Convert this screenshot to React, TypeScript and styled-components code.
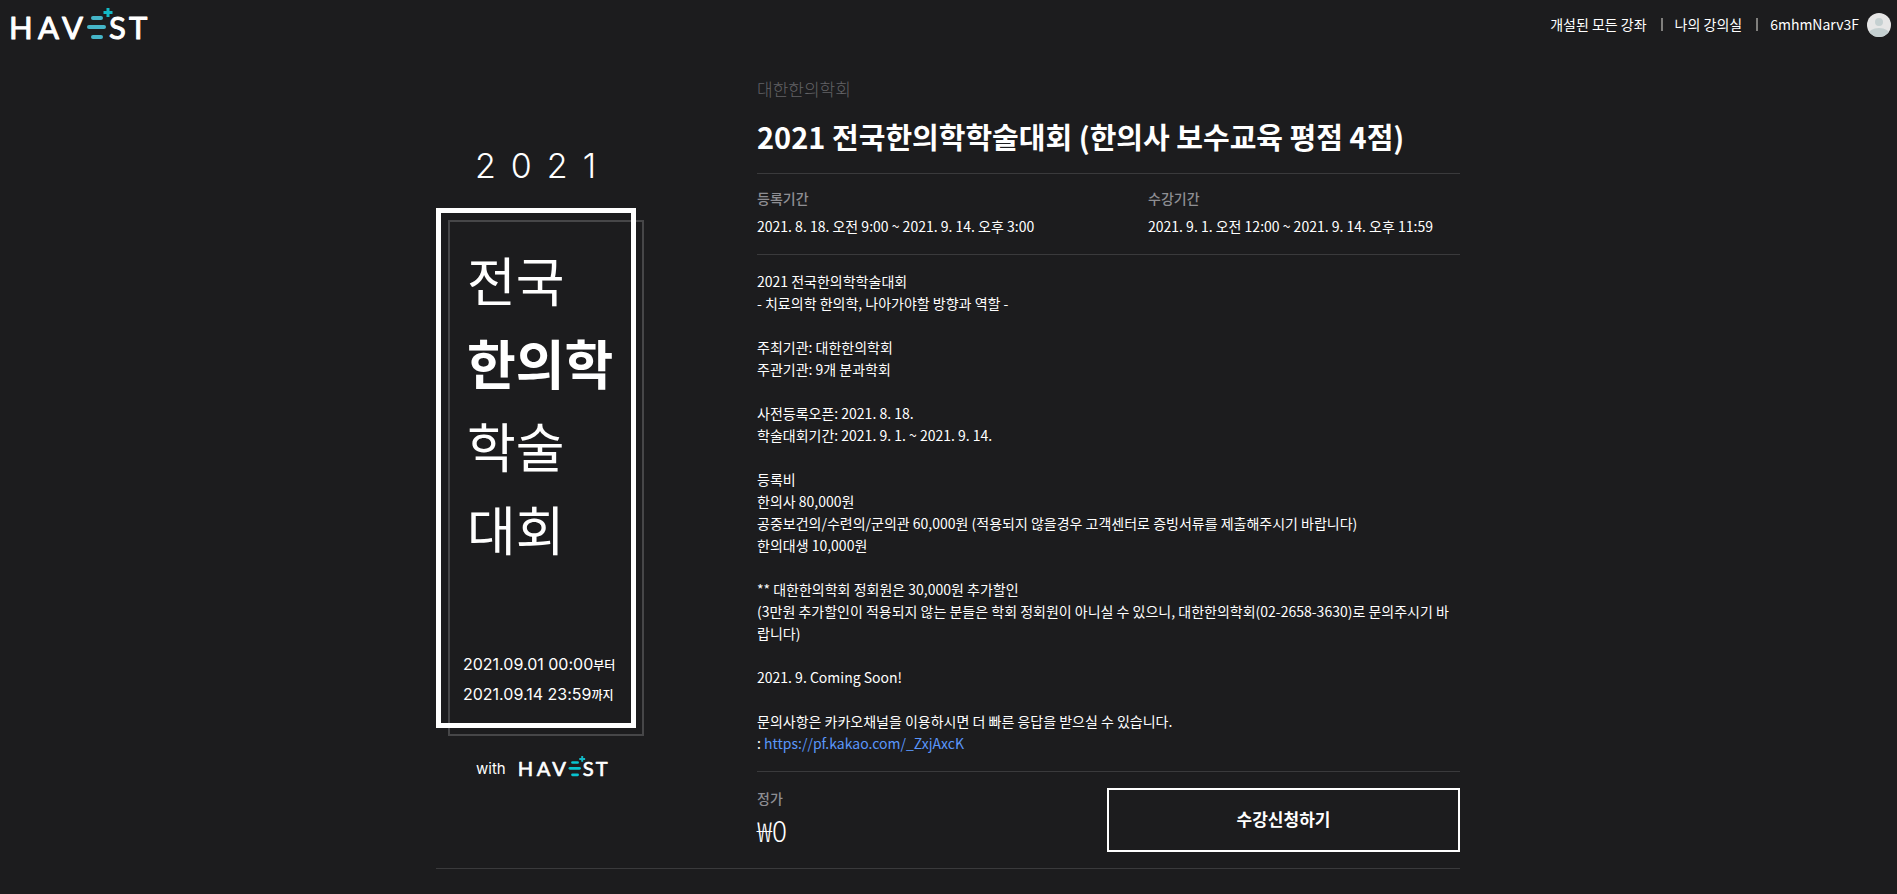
import React from "react";
import styled, { createGlobalStyle } from "styled-components";

const GlobalStyle = createGlobalStyle`
  *, *::before, *::after { box-sizing: border-box; }
  body {
    margin: 0;
    background: #1c1c1e;
    color: #fff;
    font-family: "Noto Sans CJK KR", sans-serif;
    font-size: 14px;
    line-height: 22px;
  }
  a { color: inherit; text-decoration: none; }
  h1, h2, p, dl, dt, dd { margin: 0; }
`;

const Header = styled.header`
  display: flex;
  justify-content: space-between;
  align-items: flex-start;
  height: 64px;
  padding: 0 6px 0 8px;
`;

const LogoLink = styled.a`
  display: block;
  padding-top: 8px;
`;

const Nav = styled.nav`
  display: flex;
  align-items: flex-start;
  padding-top: 12px;

  svg { margin: 1px 0 0 8px; }
`;

const NavLink = styled.a`
  display: flex;
  align-items: center;
  line-height: 24px;

  & + &::before {
    content: "";
    width: 2px;
    height: 13px;
    margin: 0 12px 0 14px;
    background: #807f7d;
  }
`;

const Page = styled.div`
  padding-right: 1px;
`;

const Main = styled.main`
  max-width: 1024px;
  margin: 0 auto;
  padding-top: 10px;
`;

const Course = styled.article`
  display: grid;
  grid-template-columns: 208px minmax(0, 1fr);
  column-gap: 113px;
  padding-bottom: 16px;
  border-bottom: 1px solid #3a3a3c;
`;

const Poster = styled.figure`
  margin: 0;
  padding-top: 71px;
  font-family: Inter, "Noto Sans CJK KR", sans-serif;
`;

const PosterYear = styled.p`
  padding-left: 39px;
  font-size: 34px;
  font-weight: 300;
  line-height: 42px;
  letter-spacing: 15px;
`;

const PosterFrame = styled.div`
  position: relative;
  width: 200px;
  height: 520px;
  margin-top: 21px;
  padding: 25px 0 14px 22px;
  border: 5px solid #fff;
  display: flex;
  flex-direction: column;
  justify-content: space-between;

  &::before {
    content: "";
    position: absolute;
    z-index: -1;
    top: 7px;
    left: 7px;
    width: 196px;
    height: 516px;
    border: 2px solid #464648;
  }
`;

const PosterTitle = styled.p`
  padding-left: 4px;
  font-family: "Noto Sans CJK KR", sans-serif;
  font-size: 53px;
  line-height: 83px;
`;

const PosterDates = styled.p`
  font-size: 16px;
  line-height: 30px;
  white-space: nowrap;

  small { font-size: 12px; font-weight: 500; line-height: 12px; }
`;

const PosterCredit = styled.figcaption`
  display: flex;
  align-items: center;
  gap: 11px;
  padding: 26px 0 0 40px;
  font-size: 15px;
  line-height: 30px;
`;

const Organizer = styled.p`
  color: #636366;
  font-size: 17px;
  font-weight: 300;
  line-height: 30px;
`;

const Title = styled.h1`
  padding: 11px 0 16px;
  font-size: 29px;
  font-weight: 700;
  line-height: 42px;
`;

const Periods = styled.dl`
  display: grid;
  grid-template-columns: 391px minmax(0, 1fr);
  padding: 10px 0 14px;
  border: solid #3a3a3c;
  border-width: 1px 0;
`;

const Term = styled.dt`
  color: #8e8e93;
  font-weight: 500;
  line-height: 28px;
`;

const Value = styled.dd<{ $large?: boolean }>`
  font-size: ${(p) => (p.$large ? 28 : 14)}px;
  font-weight: ${(p) => (p.$large ? 300 : 400)};
  line-height: ${(p) => (p.$large ? 36 : 28)}px;
`;

const Description = styled.div`
  padding: 15px 0 17px;
  border-bottom: 1px solid #3a3a3c;
  white-space: pre-line;
`;

const TextLink = styled.a`
  color: #5a96fa;
`;

const Purchase = styled.div`
  display: grid;
  grid-template-columns: minmax(0, 1fr) 353px;
  align-items: start;
  padding-top: 16px;
`;

const Price = styled.dl`
  margin-top: -4px;
`;

const ApplyButton = styled.button`
  height: 64px;
  padding: 0 0 2px;
  border: 2px solid #fff;
  background: transparent;
  color: #fff;
  font: 700 17px/24px "Noto Sans CJK KR", sans-serif;
  cursor: pointer;
`;

function Logo({ width, height, bar }: { width: number; height: number; bar: string }) {
  return (
    <svg width={width} height={height} viewBox="-4 0 144 40" overflow="visible" role="img" aria-label="HAVEST">
      <g fill="#fff" stroke="#fff" strokeLinejoin="round" fontFamily="Lato, sans-serif" fontSize="31">
        <text x="-3 26 50" y="31">HAV</text>
        <text x="97 117" y="31">ST</text>
      </g>
      <g fill={bar}>
        <rect x="79" y="8" width="12" height="4" rx="2" />
        <rect x="75" y="17" width="19" height="4" rx="2" />
        <rect x="79" y="27" width="12" height="4" rx="2" />
      </g>
      <path d="M96 0v9M91.500 4.500h9" stroke="#12b9c6" strokeWidth="3" />
    </svg>
  );
}

function Avatar() {
  return (
    <svg width="24" height="24" viewBox="0 0 24 24" aria-hidden="true">
      <clipPath id="avatar-clip"><circle cx="12" cy="12" r="12" /></clipPath>
      <g clipPath="url(#avatar-clip)">
        <rect width="24" height="24" fill="#e6e6e6" />
        <circle cx="12" cy="9" r="4" fill="#c5d0d1" />
        <ellipse cx="12" cy="22" rx="11" ry="7" fill="#c5d0d1" />
      </g>
    </svg>
  );
}

const description = `2021 전국한의학학술대회
- 치료의학 한의학, 나아가야할 방향과 역할 -

주최기관: 대한한의학회
주관기관: 9개 분과학회

사전등록오픈: 2021. 8. 18.
학술대회기간: 2021. 9. 1. ~ 2021. 9. 14.

등록비
한의사 80,000원
공중보건의/수련의/군의관 60,000원 (적용되지 않을경우 고객센터로 증빙서류를 제출해주시기 바랍니다)
한의대생 10,000원

** 대한한의학회 정회원은 30,000원 추가할인
(3만원 추가할인이 적용되지 않는 분들은 학회 정회원이 아니실 수 있으니, 대한한의학회(02-2658-3630)로 문의주시기 바랍니다)

2021. 9. Coming Soon!

문의사항은 카카오채널을 이용하시면 더 빠른 응답을 받으실 수 있습니다.`;

export default function App() {
  return (
    <>
      <GlobalStyle />
      <Header>
        <LogoLink href="#"><Logo width={144} height={40} bar="#45b5c8" /></LogoLink>
        <Nav>
          <NavLink href="#courses">개설된 모든 강좌</NavLink>
          <NavLink href="#classroom">나의 강의실</NavLink>
          <NavLink href="#profile">6mhmNarv3F</NavLink>
          <Avatar />
        </Nav>
      </Header>
      <Page>
        <Main>
          <Course>
            <Poster>
              <PosterYear>2021</PosterYear>
              <PosterFrame>
                <PosterTitle>전국<br /><strong>한의학</strong><br />학술<br />대회</PosterTitle>
                <PosterDates>
                  2021.09.01 00:00<small>부터</small><br />
                  2021.09.14 23:59<small>까지</small>
                </PosterDates>
              </PosterFrame>
              <PosterCredit>with <Logo width={94} height={26} bar="#08c3d0" /></PosterCredit>
            </Poster>
            <section>
              <Organizer>대한한의학회</Organizer>
              <Title>2021 전국한의학학술대회 (한의사 보수교육 평점 4점)</Title>
              <Periods>
                <div>
                  <Term>등록기간</Term>
                  <Value>2021. 8. 18. 오전 9:00 ~ 2021. 9. 14. 오후 3:00</Value>
                </div>
                <div>
                  <Term>수강기간</Term>
                  <Value>2021. 9. 1. 오전 12:00 ~ 2021. 9. 14. 오후 11:59</Value>
                </div>
              </Periods>
              <Description>
                <p>{description}</p>
                <p>: <TextLink href="#kakao">https://pf.kakao.com/_ZxjAxcK</TextLink></p>
              </Description>
              <Purchase>
                <Price>
                  <Term>정가</Term>
                  <Value $large>₩0</Value>
                </Price>
                <ApplyButton type="button">수강신청하기</ApplyButton>
              </Purchase>
            </section>
          </Course>
        </Main>
      </Page>
    </>
  );
}
